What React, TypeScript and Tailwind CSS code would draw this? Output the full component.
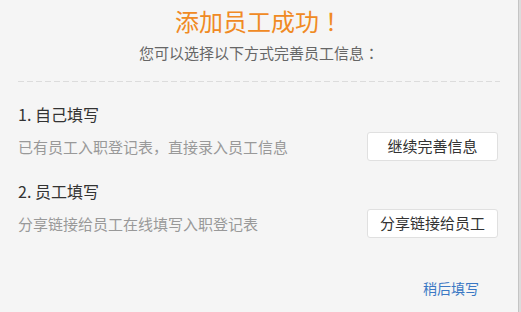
import React from "react";

const font = { fontFamily: '"Microsoft YaHei", "Noto Sans CJK SC", sans-serif' };
const centeredPunct = { fontFamily: '"Noto Sans CJK TC", sans-serif' };

function OptionRow({
  title,
  desc,
  action,
}: {
  title: string;
  desc: string;
  action: string;
}) {
  return (
    <div>
      <h3 className="text-[16px] leading-[22px] text-[#333]">{title}</h3>
      <div className="mt-[7px] flex items-center justify-between">
        <p className="text-[15px] leading-[20px] text-[#999]">{desc}</p>
        <button
          type="button"
          className="h-[29px] w-[131px] rounded-[3px] border border-[#e0e0e0] bg-white text-[15px] text-[#333]"
        >
          {action}
        </button>
      </div>
    </div>
  );
}

export default function App() {
  return (
    <div className="flex h-[312px] w-[521px] bg-[#f5f5f5]" style={font}>
      <div className="flex flex-1 flex-col px-[18px] pt-[5px]">
        <h1 className="text-center text-[24px] leading-[32px] text-[#f08a24]">
          添加员工成功<span style={centeredPunct}>！</span>
        </h1>
        <p className="mt-[6px] text-center text-[15px] leading-[20px] text-[#666]">
          您可以选择以下方式完善员工信息<span style={centeredPunct}>：</span>
        </p>
        <div className="mt-[18px] h-px w-[482px] bg-[linear-gradient(to_right,#dcdcdc_6px,transparent_6px)] bg-[length:9px_1px]" />
        <div className="mt-[21px] space-y-[19px] pr-[2px]">
          <OptionRow
            title="1. 自己填写"
            desc="已有员工入职登记表，直接录入员工信息"
            action="继续完善信息"
          />
          <OptionRow
            title="2. 员工填写"
            desc="分享链接给员工在线填写入职登记表"
            action="分享链接给员工"
          />
        </div>
        <div className="mt-[40px] flex justify-end pr-[21px]">
          <button type="button" className="text-[14px] leading-[20px] text-[#3b78c4]">
            稍后填写
          </button>
        </div>
      </div>
      <div className="w-[3px] border-l border-[#c4c4c4] bg-[#dcdcdc]" />
    </div>
  );
}
